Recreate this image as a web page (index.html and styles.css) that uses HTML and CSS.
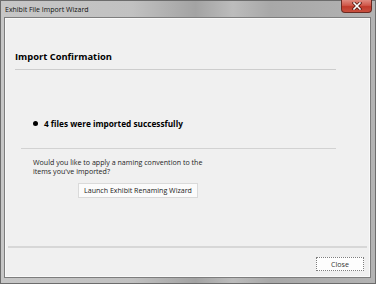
FILE: index.html
```html
<!DOCTYPE html>
<html lang="en">
<head>
<meta charset="utf-8">
<title>Exhibit File Import Wizard</title>
<link rel="stylesheet" href="styles.css">
</head>
<body>
<div class="window">
  <div class="titlebar">
    <span class="title">Exhibit File Import Wizard</span>
    <button class="close-x" aria-label="Close">
      <svg width="10" height="8" viewBox="0 0 10 8">
        <path d="M2 1 L8 7 M8 1 L2 7" stroke="#5a1d16" stroke-width="3.2" stroke-linecap="square" fill="none"/>
        <path d="M2 1 L8 7 M8 1 L2 7" stroke="#ffffff" stroke-width="1.6" stroke-linecap="square" fill="none"/>
      </svg>
    </button>
  </div>
  <div class="client">
    <div class="content">
      <h1 class="heading">Import Confirmation</h1>
      <div class="result"><span class="bullet"></span><span>4 files were imported successfully</span></div>
      <div class="question">
        <p class="prompt">Would you like to apply a naming convention to the items you've imported?</p>
        <button class="btn launch">Launch Exhibit Renaming Wizard</button>
      </div>
    </div>
    <div class="footer">
      <button class="btn close-btn">Close</button>
    </div>
  </div>
</div>
</body>
</html>
```
FILE: styles.css
```css
html, body {
  margin: 0;
  padding: 0;
}
body {
  width: 376px;
  height: 284px;
  overflow: hidden;
  font-family: "Open Sans", "Noto Sans", sans-serif;
  color: #1a1a1a;
}
.window {
  box-sizing: border-box;
  width: 376px;
  height: 284px;
  border: 1px solid #6c6c6c;
  background: linear-gradient(to right, #c6c6c6 0%, #c1c1c1 35%, #a3a3a3 52%, #bcbcbc 62%, #a8a8a8 72%, #b3b3b3 100%);
  display: flex;
  flex-direction: column;
}
.titlebar {
  height: 17px;
  flex: none;
  display: flex;
  align-items: flex-start;
  justify-content: space-between;
}
.title {
  font-size: 7px;
  line-height: 9px;
  padding: 4px 0 0 4px;
  color: #111;
}
.close-x {
  width: 31px;
  height: 13px;
  margin: -1px 3px 0 0;
  padding: 0;
  box-sizing: border-box;
  border: 1px solid #6a2a22;
  border-top: none;
  border-radius: 0 0 4px 4px;
  background: linear-gradient(to bottom, #e08a7f 0%, #d0584a 45%, #c13a2b 55%, #c9503f 100%);
  display: flex;
  align-items: center;
  justify-content: center;
}
.close-x svg {
  display: block;
}
.client {
  flex: 1;
  margin: 0 5px 6px 4px;
  background: #f0f0f0;
  border: 1px solid #f9f9f9;
  box-shadow: 0 0 0 1px #7d7d7d;
  display: flex;
  flex-direction: column;
}
.content {
  flex: 1;
  padding: 31px 33px 0 9px;
}
.heading {
  margin: 0;
  font-size: 9.35px;
  line-height: 13px;
  font-weight: 700;
  color: #000;
  padding-bottom: 6px;
  border-bottom: 1px solid #cdcdcd;
}
.result {
  margin-top: 48px;
  padding-left: 18px;
  display: flex;
  align-items: center;
  gap: 6px;
  font-size: 8.26px;
  line-height: 11px;
  font-weight: 700;
  color: #000;
}
.bullet {
  width: 5px;
  height: 5px;
  border-radius: 50%;
  background: #000;
  flex: none;
}
.question {
  margin: 19px 0 0 6px;
  border-top: 1px solid #d2d2d2;
  padding: 9px 0 0 12px;
}
.prompt {
  margin: 0;
  width: 185px;
  font-size: 7.1px;
  line-height: 9px;
  color: #1e1e1e;
}
.btn {
  font-family: "Open Sans", "Noto Sans", sans-serif;
  font-size: 7.08px;
  line-height: 9px;
  color: #222;
  box-sizing: border-box;
  padding: 0 5px;
  margin: 0;
}
.launch {
  display: block;
  margin: 7px 0 0 45px;
  height: 15px;
  background: #fbfbfb;
  border: 1px solid #dadada;
}
.footer {
  margin: 0 2px;
  border-top: 2px solid #d7d7d7;
  padding: 9px 3px 5px;
  display: flex;
  justify-content: flex-end;
}
.close-btn {
  width: 48px;
  height: 14px;
  background: #fdfdfd;
  border: 1px dotted #7e7e7e;
  color: #333;
}
```
